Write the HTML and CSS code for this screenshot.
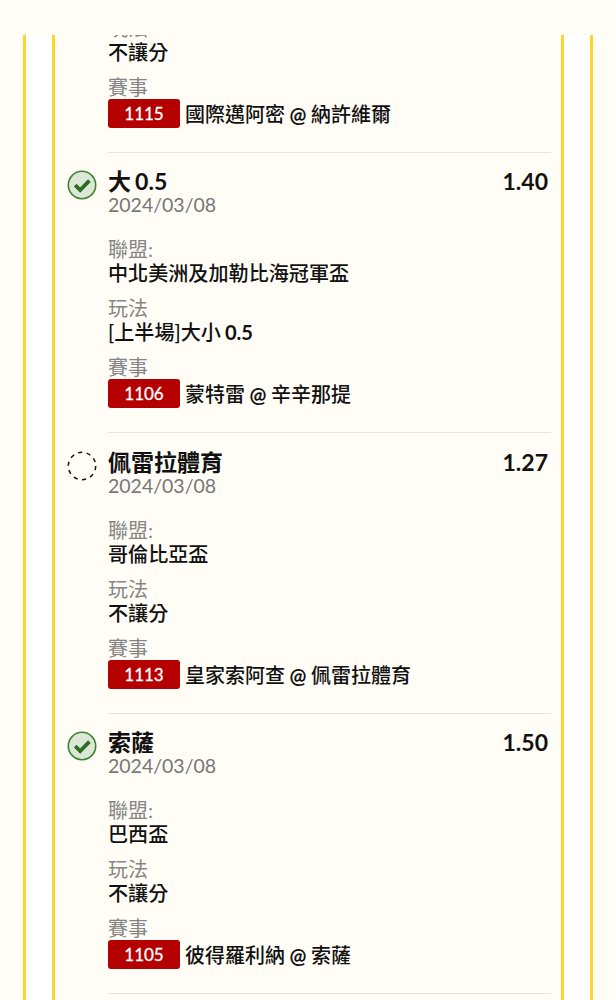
FILE: index.html
```html
<!DOCTYPE html>
<html lang="zh-TW">
<head>
  <meta charset="UTF-8" />
  <meta name="viewport" content="width=device-width, initial-scale=1.0" />
  <title>投注明細</title>
  <link rel="stylesheet" href="styles.css">
</head>
<body>
  <div class="outer">
    <div class="inner">
      <div class="list">

        <div class="item first">
          <div class="icon"></div>
          <div class="body">
            <div class="label">玩法</div>
            <div class="value">不讓分</div>
            <div class="label gap">賽事</div>
            <div class="match"><span class="badge">1115</span><span class="teams">國際邁阿密 <b>@</b> 納許維爾</span></div>
          </div>
        </div>

        <div class="item">
          <div class="icon">
            <svg width="30" height="30" viewBox="0 0 30 30"><circle class="won" cx="15" cy="15" r="13.7"/><path class="tick" d="M8.2 15.2l5 4.8 9.2-9.4"/></svg>
          </div>
          <div class="body">
            <div class="head"><span class="pick">大 0.5</span><span class="odds">1.40</span></div>
            <div class="date">2024/03/08</div>
            <div class="label league">聯盟:</div>
            <div class="value">中北美洲及加勒比海冠軍盃</div>
            <div class="label gap">玩法</div>
            <div class="value">[上半場]大小 <b>0.5</b></div>
            <div class="label gap">賽事</div>
            <div class="match"><span class="badge">1106</span><span class="teams">蒙特雷 <b>@</b> 辛辛那提</span></div>
          </div>
        </div>

        <div class="item">
          <div class="icon">
            <svg width="30" height="30" viewBox="0 0 30 30"><circle class="pending" cx="15" cy="15" r="13.7"/></svg>
          </div>
          <div class="body">
            <div class="head"><span class="pick">佩雷拉體育</span><span class="odds">1.27</span></div>
            <div class="date">2024/03/08</div>
            <div class="label league">聯盟:</div>
            <div class="value">哥倫比亞盃</div>
            <div class="label gap">玩法</div>
            <div class="value">不讓分</div>
            <div class="label gap">賽事</div>
            <div class="match"><span class="badge">1113</span><span class="teams">皇家索阿查 <b>@</b> 佩雷拉體育</span></div>
          </div>
        </div>

        <div class="item">
          <div class="icon">
            <svg width="30" height="30" viewBox="0 0 30 30"><circle class="won" cx="15" cy="15" r="13.7"/><path class="tick" d="M8.2 15.2l5 4.8 9.2-9.4"/></svg>
          </div>
          <div class="body">
            <div class="head"><span class="pick">索薩</span><span class="odds">1.50</span></div>
            <div class="date">2024/03/08</div>
            <div class="label league">聯盟:</div>
            <div class="value">巴西盃</div>
            <div class="label gap">玩法</div>
            <div class="value">不讓分</div>
            <div class="label gap">賽事</div>
            <div class="match"><span class="badge">1105</span><span class="teams">彼得羅利納 <b>@</b> 索薩</span></div>
          </div>
        </div>

      </div>
    </div>
  </div>
</body>
</html>
```

FILE: styles.css
```css
html, body {
  margin: 0;
  height: 1000px;
  overflow: hidden;
  background: #fffdf5;
}
body {
  padding-top: 35px;
  box-sizing: border-box;
  font-family: Lato, "Noto Sans CJK TC", sans-serif;
  color: #111;
}
b {
  font-weight: 700;
}
.outer {
  margin: 0 23px;
  height: 965px;
  padding: 0 26px;
  background: #fff;
  border-left: 3px solid #ffd52b;
  border-right: 3px solid #ffd52b;
  box-sizing: border-box;
}
.inner {
  height: 100%;
  background: #fffdf5;
  border-left: 3px solid #ffd52b;
  border-right: 3px solid #ffd52b;
  overflow: hidden;
}
.list {
  margin-top: -19px;
  padding-right: 10px;
}
.item {
  display: flex;
  padding-top: 16.3px;
}
.item.first {
  padding-top: 0;
}
.icon {
  width: 53px;
  flex: none;
  padding-left: 12px;
  box-sizing: border-box;
}
.icon svg {
  display: block;
  margin-top: 1px;
}
.body {
  flex: 1;
  padding-bottom: 24px;
  border-bottom: 1px solid #e6e4dc;
}
.head {
  display: flex;
  justify-content: space-between;
  padding-right: 3px;
  font-size: 23px;
  line-height: 24px;
  font-weight: 700;
  word-spacing: -1.5px;
}
.date {
  font-size: 19.5px;
  line-height: 24px;
  color: #777;
}
.label {
  font-size: 20px;
  line-height: 24px;
  color: #858585;
}
.league {
  margin-top: 20px;
}
.gap {
  margin-top: 11px;
}
.value {
  font-size: 20.1px;
  line-height: 24px;
  font-weight: 500;
  word-spacing: -1px;
}
.match {
  display: flex;
  align-items: center;
  height: 29px;
}
.badge {
  width: 72px;
  height: 29px;
  line-height: 29px;
  text-align: center;
  flex: none;
  background: #b40000;
  border-radius: 3px;
  color: #fff;
  font-size: 17px;
  -webkit-text-stroke: 0.3px #fff;
}
.teams {
  margin-left: 5px;
  font-size: 20px;
  font-weight: 500;
  word-spacing: -0.5px;
}
.won {
  fill: #dce7d8;
  stroke: #3b8530;
  stroke-width: 1.6;
}
.tick {
  fill: none;
  stroke: #2c6e24;
  stroke-width: 3.8;
}
.pending {
  fill: none;
  stroke: #111;
  stroke-width: 1.5;
  stroke-dasharray: 4.2 4.4;
}
```
